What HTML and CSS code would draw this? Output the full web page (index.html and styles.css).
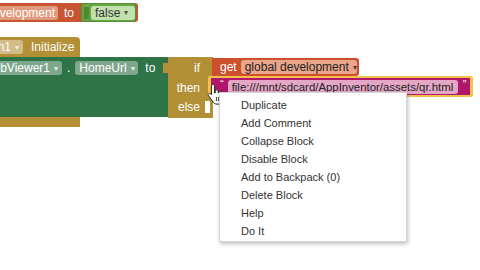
FILE: index.html
```html
<!DOCTYPE html>
<html lang="en">
<head>
  <meta charset="UTF-8" />
  <title>Blocks Editor</title>
  <link rel="stylesheet" href="styles.css">
</head>
<body>

  <div class="workspace">

    <div class="block set-block">
      <span class="field field-red">development</span>
      <span class="label">to</span>
      <div class="block bool-block">
        <span class="tab tab-green"></span>
        <span class="field field-green">false <i class="arrow">&#9662;</i></span>
      </div>
    </div>

    <div class="block init-block">
      <span class="field field-gold">n1 <i class="arrow">&#9662;</i></span>
      <span class="label">Initialize</span>
    </div>

    <div class="block comp-block">
      <div class="comp-row">
        <span class="field field-comp">bViewer1 <i class="arrow">&#9662;</i></span>
        <span class="label dot">.</span>
        <span class="field field-comp">HomeUrl <i class="arrow">&#9662;</i></span>
        <span class="label">to</span>
        <span class="tab tab-gold"></span>
      </div>
    </div>
    <div class="init-bottom"></div>

    <div class="block if-block">
      <span class="label">if</span>
      <span class="label">then</span>
      <span class="label">else</span>
      <span class="else-slot"></span>
    </div>

    <div class="block get-block">
      <span class="label">get</span>
      <span class="field field-get">global development <i class="arrow">&#9662;</i></span>
    </div>

    <div class="selected">
      <div class="block text-block">
        <span class="quote">&#8220;</span>
        <span class="field field-text">file:///mnt/sdcard/AppInventor/assets/qr.html</span>
        <span class="quote">&#8221;</span>
      </div>
    </div>

    <svg class="cursor" width="20" height="22" viewBox="0 0 20 22">
      <path d="M6 1.5c1 0 1.6.7 1.6 1.6v7l.6-.1V8.3c0-.9.7-1.5 1.5-1.5s1.5.6 1.5 1.5v1.5l.5-.1c0-.9.7-1.4 1.5-1.4s1.4.6 1.4 1.4v1.2l.4-.1c.2-.7.8-1 1.4-1 .8 0 1.4.6 1.4 1.4v4.5c0 3.2-2.300 5.4-5.3 5.4H10c-1.8 0-3-.7-4-2.1L1.5 12.6c-.5-.7-.3-1.6.4-2 .6-.4 1.4-.3 1.9.3l.6.8V3.1C4.4 2.2 5 1.5 6 1.5z" fill="#fff" stroke="#222" stroke-width="1"/>
      <path d="M9.4 14v4M11.6 14v4M13.8 14v4" stroke="#222" stroke-width="0.9"/>
    </svg>

    <ul class="context-menu">
      <li>Duplicate</li>
      <li>Add Comment</li>
      <li>Collapse Block</li>
      <li>Disable Block</li>
      <li>Add to Backpack (0)</li>
      <li>Delete Block</li>
      <li>Help</li>
      <li>Do It</li>
    </ul>

  </div>

</body>
</html>
```

FILE: styles.css
```css
body {
  margin: 0;
  padding: 0;
  background: #fff;
  font-family: "Liberation Sans", Arial, sans-serif;
  overflow: hidden;
}

.workspace {
  position: relative;
  width: 480px;
  height: 270px;
  background: #fff;
  overflow: hidden;
}

/* blocks sit on a free canvas */
.block {
  position: absolute;
  display: flex;
  align-items: center;
  color: #fff;
  font-size: 12px;
  box-sizing: border-box;
}

.label {
  white-space: nowrap;
}

.field {
  display: flex;
  align-items: center;
  height: 14px;
  padding: 0 4px;
  border-radius: 3px;
  white-space: nowrap;
  box-sizing: border-box;
}

.arrow {
  font-style: normal;
  font-size: 8px;
  margin-left: 4px;
  opacity: 0.8;
}

.tab {
  display: block;
  width: 5px;
  height: 12px;
}

/* set global development to false */
.set-block {
  top: 3px;
  left: -6px;
  height: 19px;
  width: 144px;
  padding-left: 4px;
  background: #c85532;
  border-radius: 0 3px 3px 0;
}

.field-red {
  background: #e29a7e;
  width: 60px;
  justify-content: flex-end;
  padding-right: 3px;
}

.set-block > .label {
  margin-left: 6px;
}

.bool-block {
  position: static;
  margin-left: 7px;
  height: 19px;
  width: 55px;
  background: #68a545;
  border-radius: 3px;
  padding-left: 2px;
  border: 1px solid #55913a;
}

.tab-green {
  background: #4c8a34;
}

.field-green {
  margin-left: 2px;
  background: #c2e2ad;
  color: #333;
  width: 44px;
}

/* initialize event */
.init-block {
  top: 37px;
  left: -6px;
  width: 86px;
  height: 20px;
  padding-left: 4px;
  background: #b39035;
  border-radius: 0 4px 0 0;
}

.field-gold {
  background: #d2bd88;
  width: 25px;
  justify-content: flex-end;
}

.init-block > .label {
  margin-left: 8px;
}

.init-bottom {
  position: absolute;
  top: 117px;
  left: 0;
  width: 80px;
  height: 10px;
  background: #b39035;
}

/* set WebViewer1.HomeUrl */
.comp-block {
  top: 57px;
  left: -6px;
  width: 178px;
  height: 60px;
  background: #2e7446;
  align-items: flex-start;
  padding: 4px 0 0 4px;
}

.comp-row {
  display: flex;
  align-items: center;
  height: 14px;
}

.field-comp {
  background: #7fa78d;
}

.comp-row .field-comp:first-child {
  width: 64px;
  justify-content: flex-end;
}

.comp-row .field-comp:nth-child(3) {
  width: 63px;
}

.dot {
  margin: 0 5px;
}

.comp-row > .label:nth-child(4) {
  margin-left: 7px;
}

.tab-gold {
  margin-left: 8px;
  background: #b39035;
  height: 10px;
}

/* if then else */
.if-block {
  top: 57px;
  left: 168px;
  width: 45px;
  height: 61px;
  background: #b39035;
  flex-direction: column;
  align-items: flex-end;
  padding: 2px 13px 0 0;
}

.if-block .label {
  height: 20px;
  line-height: 18px;
}

.else-slot {
  position: absolute;
  right: 3px;
  top: 44px;
  width: 5px;
  height: 12px;
  background: #fff;
}

.get-block {
  top: 58px;
  left: 212px;
  width: 147px;
  height: 18px;
  background: #cd4f2b;
  padding-left: 8px;
  border-radius: 0 3px 3px 0;
}

.field-get {
  margin-left: 4px;
  width: 116px;
  background: #eaa58a;
  color: #222;
}

.selected {
  position: absolute;
  top: 76px;
  left: 208px;
  width: 265px;
  height: 21px;
  background: #f6c04a;
  border-radius: 2px;
}

.text-block {
  top: 2px;
  left: 3px;
  width: 259px;
  height: 17px;
  background: #b0176a;
  padding-left: 9px;
}

.quote {
  font-size: 11px;
  line-height: 10px;
  align-self: flex-start;
  margin-top: 1px;
}

.field-text {
  margin: 0 5px 0 4px;
  width: 230px;
  font-size: 11.4px;
  background: #e5a7c6;
  color: #222;
}

.cursor {
  position: absolute;
  left: 207px;
  top: 83px;
}

/* context menu */
.context-menu {
  position: absolute;
  top: 92px;
  left: 219px;
  width: 188px;
  height: 150px;
  margin: 0;
  padding: 3px 0 0 0;
  list-style: none;
  background: #fff;
  border: 1px solid #d4d4d4;
  box-shadow: 1px 2px 4px rgba(0, 0, 0, 0.25);
  box-sizing: border-box;
  font-size: 11px;
  color: #333;
}

.context-menu li {
  height: 18px;
  line-height: 18px;
  padding-left: 21px;
}
```
